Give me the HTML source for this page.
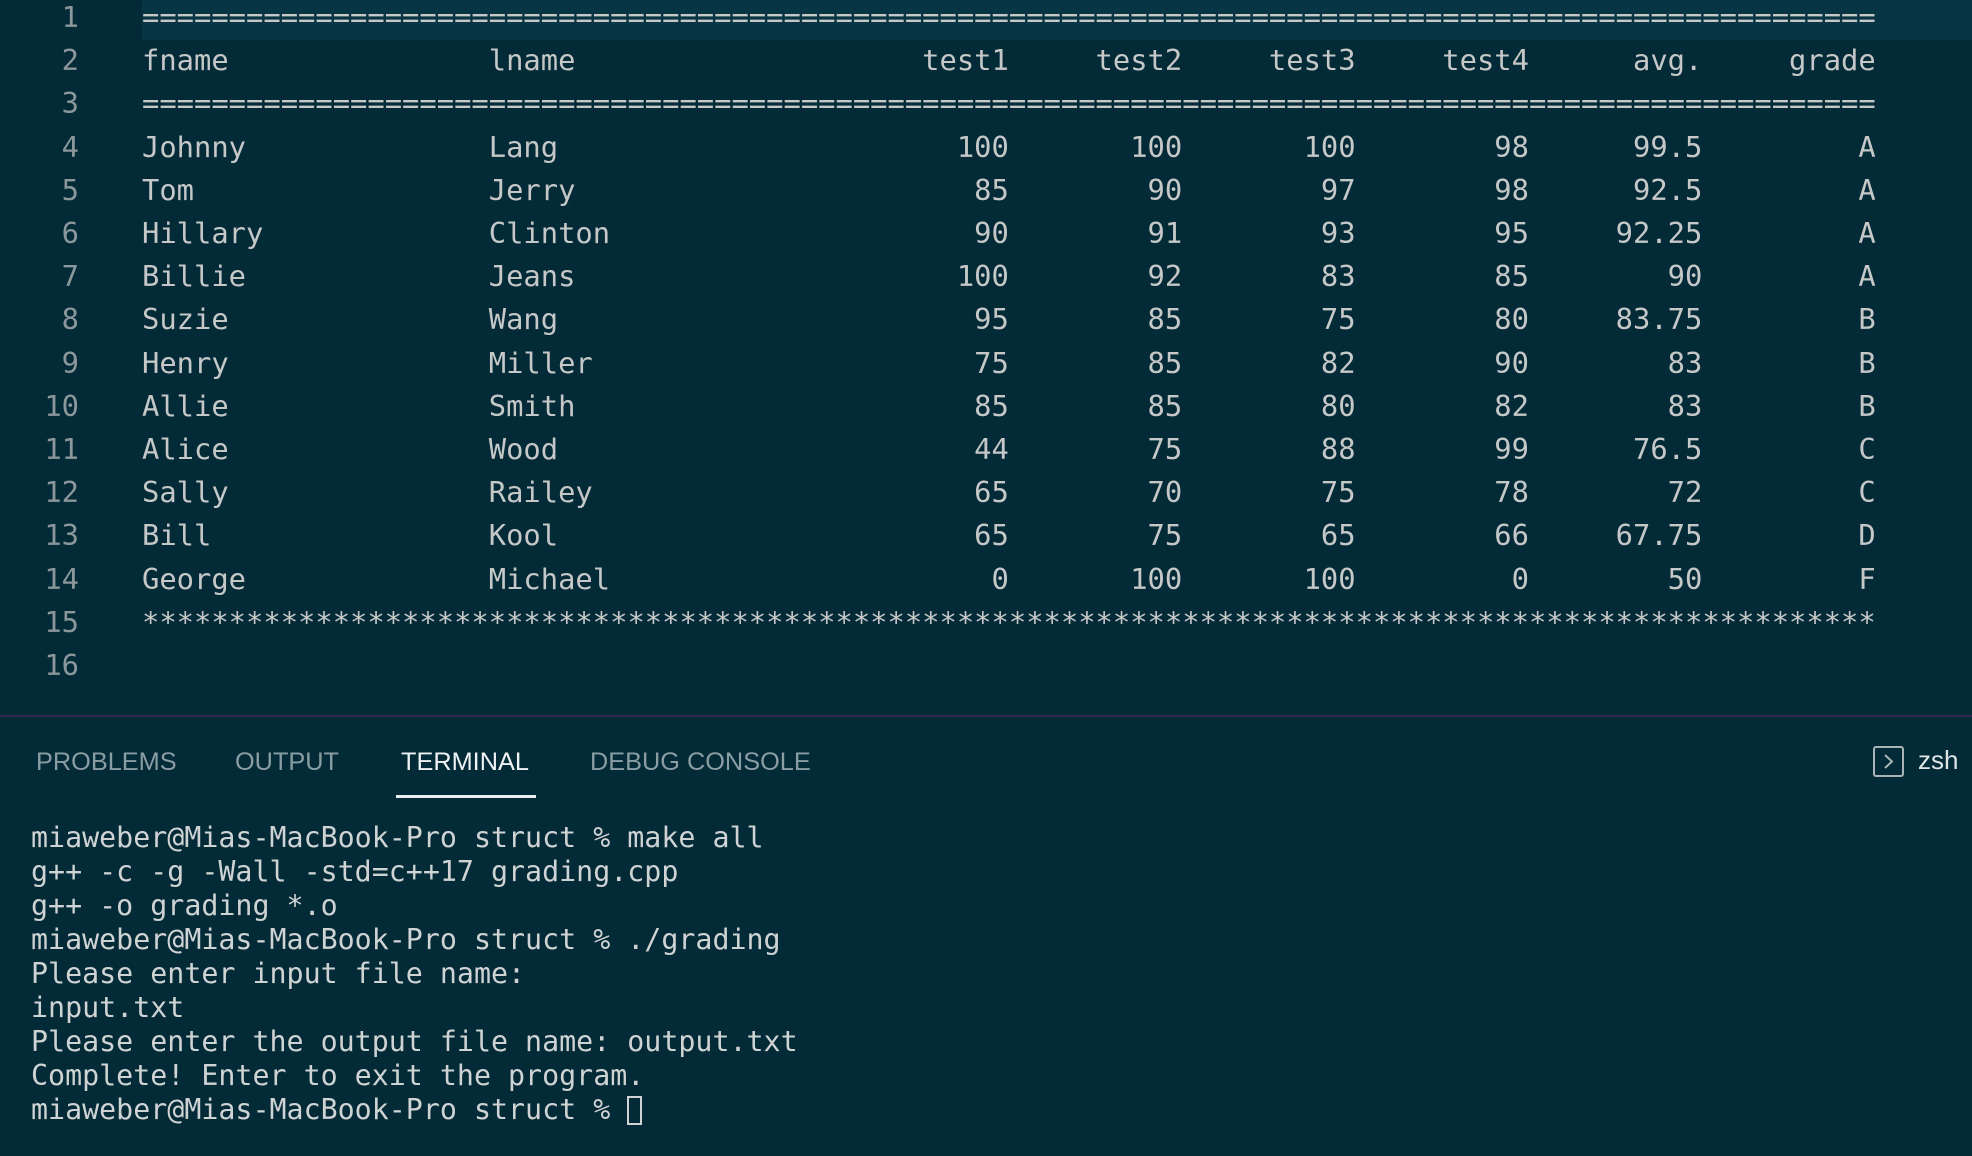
<!DOCTYPE html>
<html><head><meta charset="utf-8">
<style>
html,body{margin:0;padding:0;}
body{width:1972px;height:1156px;background:#022a37;overflow:hidden;position:relative;font-family:"DejaVu Sans Mono","Liberation Mono",monospace;}
.hl{position:absolute;left:142px;top:0;width:1830px;height:40px;background:#073543;}
.ed{position:absolute;left:0;top:-4px;}
.ln{position:absolute;left:0;width:79px;text-align:right;color:#8b979b;font-size:28.8px;line-height:43.2px;}
.code{position:absolute;left:142px;color:#c6c8c8;font-size:28.8px;line-height:43.2px;white-space:pre;}
.sep{position:absolute;left:0;top:715px;width:1972px;height:2px;background:#33284f;}
.tab{position:absolute;top:748px;font-family:"Liberation Sans",sans-serif;font-size:25.3px;color:#8a9da3;}
.tab.act{color:#eef2f3;}
.ul{position:absolute;left:396px;top:795px;width:140px;height:3px;background:#e8eef0;}
.term{position:absolute;left:31px;top:821px;color:#cfd3d3;font-size:28.3px;line-height:34px;white-space:pre;}
.cur{display:inline-block;width:15px;height:29px;border:2px solid #cfd3d3;vertical-align:-6px;box-sizing:border-box;}
.icon{position:absolute;left:1873px;top:746px;width:31px;height:31px;border:2px solid #aab4b7;border-radius:3px;box-sizing:border-box;}
.zsh{position:absolute;left:1918px;top:745px;font-family:"Liberation Sans",sans-serif;font-size:26px;color:#dfe4e5;}
</style></head><body>
<div class="hl"></div>
<div class="ed">
<div class="ln">1<br>2<br>3<br>4<br>5<br>6<br>7<br>8<br>9<br>10<br>11<br>12<br>13<br>14<br>15<br>16</div>
<div class="code">====================================================================================================
fname               lname                    test1     test2     test3     test4      avg.     grade
====================================================================================================
Johnny              Lang                       100       100       100        98      99.5         A
Tom                 Jerry                       85        90        97        98      92.5         A
Hillary             Clinton                     90        91        93        95     92.25         A
Billie              Jeans                      100        92        83        85        90         A
Suzie               Wang                        95        85        75        80     83.75         B
Henry               Miller                      75        85        82        90        83         B
Allie               Smith                       85        85        80        82        83         B
Alice               Wood                        44        75        88        99      76.5         C
Sally               Railey                      65        70        75        78        72         C
Bill                Kool                        65        75        65        66     67.75         D
George              Michael                      0       100       100         0        50         F
****************************************************************************************************
</div>
</div>
<div class="sep"></div>
<div class="tab" style="left:36px">PROBLEMS</div>
<div class="tab" style="left:235px">OUTPUT</div>
<div class="tab act" style="left:401px">TERMINAL</div>
<div class="tab" style="left:590px">DEBUG CONSOLE</div>
<div class="ul"></div>
<div class="icon"><svg width="27" height="27" viewBox="0 0 27 27"><path d="M10 7 L17 13.5 L10 20" fill="none" stroke="#aab4b7" stroke-width="2"/></svg></div>
<div class="zsh">zsh</div>
<div class="term">miaweber@Mias-MacBook-Pro struct % make all
g++ -c -g -Wall -std=c++17 grading.cpp
g++ -o grading *.o
miaweber@Mias-MacBook-Pro struct % ./grading
Please enter input file name:
input.txt
Please enter the output file name: output.txt
Complete! Enter to exit the program.
miaweber@Mias-MacBook-Pro struct % <span class="cur"></span></div>
</body></html>
